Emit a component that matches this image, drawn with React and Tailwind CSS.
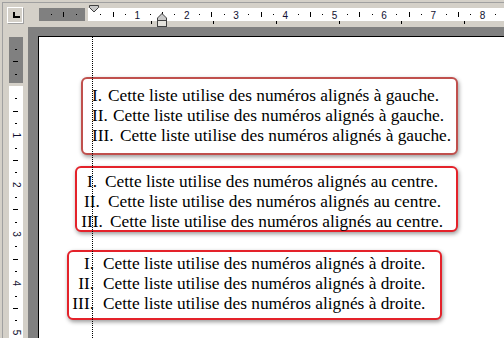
const CM = 49.33;
const H_ZERO = 88;
const V_ZERO = 86;

const boxes = [
  {
    key: 'gauche',
    wrap: 'ml-[42px] mt-[40px] w-[377px] h-[78px] pt-[7px] pl-[9px] border-[#c0504d]',
    numAlign: 'text-left',
    text: 'Cette liste utilise des numéros alignés à gauche.',
    rows: [
      { n: 'I.', w: 'w-[16px]', gap: '' },
      { n: 'II.', w: 'w-[21px]', gap: '' },
      { n: 'III.', w: 'w-[28px]', gap: '' },
    ],
  },
  {
    key: 'centre',
    wrap: 'ml-[36px] mt-[11px] w-[383px] h-[66px] pt-[4px] pl-[3px] border-[#e4222a]',
    numAlign: 'text-center',
    text: 'Cette liste utilise des numéros alignés au centre.',
    rows: [
      { n: 'I.', w: 'w-[24px]', gap: 'ml-[1px]' },
      { n: 'II.', w: 'w-[24px]', gap: 'ml-[4px]' },
      { n: 'III.', w: 'w-[24px]', gap: 'ml-[6px]' },
    ],
  },
  {
    key: 'droite',
    wrap: 'ml-[28px] mt-[18px] w-[375px] h-[70px] pt-[2px] pl-[3px] border-[#e4222a]',
    numAlign: 'text-right',
    text: 'Cette liste utilise des numéros alignés à droite.',
    rows: [
      { n: 'I.', w: 'w-[22px]', gap: 'ml-[9px]' },
      { n: 'II.', w: 'w-[22px]', gap: 'ml-[9px]' },
      { n: 'III.', w: 'w-[22px]', gap: 'ml-[9px]' },
    ],
  },
];

// horizontal ruler drawing (absolute page coords)
function HRulerMarks() {
  const items = [];
  for (let i = -3; H_ZERO + (i * CM) / 4 < 504; i++) {
    const x = H_ZERO + (i * CM) / 4;
    const m = ((i % 4) + 4) % 4;
    if (i === 0) continue;
    if (m === 0) {
      items.push(
        <text key={i} x={x} y={19} textAnchor="middle" fontSize="10" fontFamily="Liberation Sans, Arial, sans-serif" fill="#101030">
          {i / 4}
        </text>
      );
    } else if (m === 2) {
      items.push(<rect key={i} x={Math.round(x)} y={12} width={1} height={5} fill="#000" />);
    } else {
      items.push(<rect key={i} x={Math.round(x)} y={14} width={1} height={1} fill="#000" />);
    }
  }
  // default tab stops
  for (let n = 1; H_ZERO + n * 62.65 < 504; n++) {
    items.push(<rect key={'t' + n} x={Math.round(H_ZERO + n * 62.65)} y={21} width={1} height={3} fill="#000" />);
  }
  return (
    <svg className="absolute left-0 top-0 w-[504px] h-[30px] pointer-events-none" viewBox="0 0 504 30">
      {items}
      {/* first line indent */}
      <polygon points="89.5,5.5 98.5,5.5 98.5,7.5 94,12 89.5,7.5" fill="#c8c8c8" stroke="#404040" strokeWidth="1" />
      {/* hanging + left indent */}
      <polygon points="162,13.5 166.5,18 166.5,20.5 157.5,20.5 157.5,18" fill="#c8c8c8" stroke="#404040" strokeWidth="1" />
      <rect x="157.5" y="20.5" width="9" height="6" fill="#e4e2dc" stroke="#404040" strokeWidth="1" />
    </svg>
  );
}

function VRulerMarks() {
  const items = [];
  for (let i = -3; V_ZERO + (i * CM) / 4 < 338; i++) {
    const y = V_ZERO + (i * CM) / 4;
    const m = ((i % 4) + 4) % 4;
    if (i === 0) continue;
    if (m === 0) {
      items.push(
        <text
          key={i}
          transform={`translate(16 ${y}) rotate(90)`}
          textAnchor="middle"
          dominantBaseline="central"
          fontSize="10"
          fontFamily="Liberation Sans, Arial, sans-serif"
          fill="#101030"
        >
          {i / 4}
        </text>
      );
    } else if (m === 2) {
      items.push(<rect key={i} x={13} y={Math.round(y)} width={5} height={1} fill="#000" />);
    } else {
      items.push(<rect key={i} x={15} y={Math.round(y)} width={2} height={1} fill="#000" />);
    }
  }
  return (
    <svg className="absolute left-0 top-0 w-[30px] h-[338px] pointer-events-none" viewBox="0 0 30 338">
      {items}
    </svg>
  );
}

function ListBox({ box }) {
  return (
    <div
      className={`${box.wrap} border-2 rounded-[6px] bg-white shadow-[1px_2px_4px_rgba(0,0,0,0.4)] flex flex-col font-['Liberation_Serif',serif] text-[17.33px] leading-[20px] text-black`}
    >
      {box.rows.map((r) => (
        <div key={r.n} className="flex whitespace-nowrap">
          <span className={`${r.w} ${box.numAlign} shrink-0`}>{r.n}</span>
          <span className={r.gap}>{box.text}</span>
        </div>
      ))}
    </div>
  );
}

export default function App() {
  return (
    <div className="relative w-[504px] h-[338px] overflow-hidden bg-[#d4d0c8] pt-[2px] pl-[2px] font-['Liberation_Sans',sans-serif]">
      <div className="h-full flex flex-col border-t border-l border-[#a0a0a0]">
        {/* top strip: tab selector + horizontal ruler */}
        <div className="h-[24px] flex shrink-0">
          <div className="w-[36px] pl-[4px] pt-[4px] shrink-0">
            <div className="w-[16px] h-[16px] border border-white shadow-[1px_1px_0_#a0a0a0] bg-[#d4d0c8] relative">
              <svg className="absolute left-0 top-0" width="14" height="14" viewBox="0 0 14 14">
                <rect x="5" y="4" width="2" height="6" fill="#000" />
                <rect x="5" y="8" width="7" height="2" fill="#000" />
              </svg>
            </div>
          </div>
          <div className="flex-1 pt-[5px]">
            <div className="h-[13px] flex">
              <div className="w-[46px] bg-[#808080]" />
              <div className="w-[3px]" />
              <div className="flex-1 bg-white" />
            </div>
          </div>
        </div>

        {/* body: vertical ruler + page */}
        <div className="flex-1 flex min-h-0">
          <div className="w-[25px] shrink-0 pl-[6px] pt-[10px]">
            <div className="w-[14px] h-full flex flex-col">
              <div className="h-[46px] bg-[#808080]" />
              <div className="h-[3px]" />
              <div className="flex-1 bg-white" />
            </div>
          </div>
          <div className="flex-1 bg-[#808080] pl-[10px] pt-[9px] flex">
            <div className="relative flex-1 bg-white border-l border-t border-black">
              <div className="flex flex-col">
                {boxes.map((b) => (
                  <ListBox key={b.key} box={b} />
                ))}
              </div>
              <div className="absolute left-[53px] top-0 bottom-0 border-l border-dotted border-black" />
            </div>
          </div>
        </div>
      </div>

      <HRulerMarks />
      <VRulerMarks />
    </div>
  );
}
